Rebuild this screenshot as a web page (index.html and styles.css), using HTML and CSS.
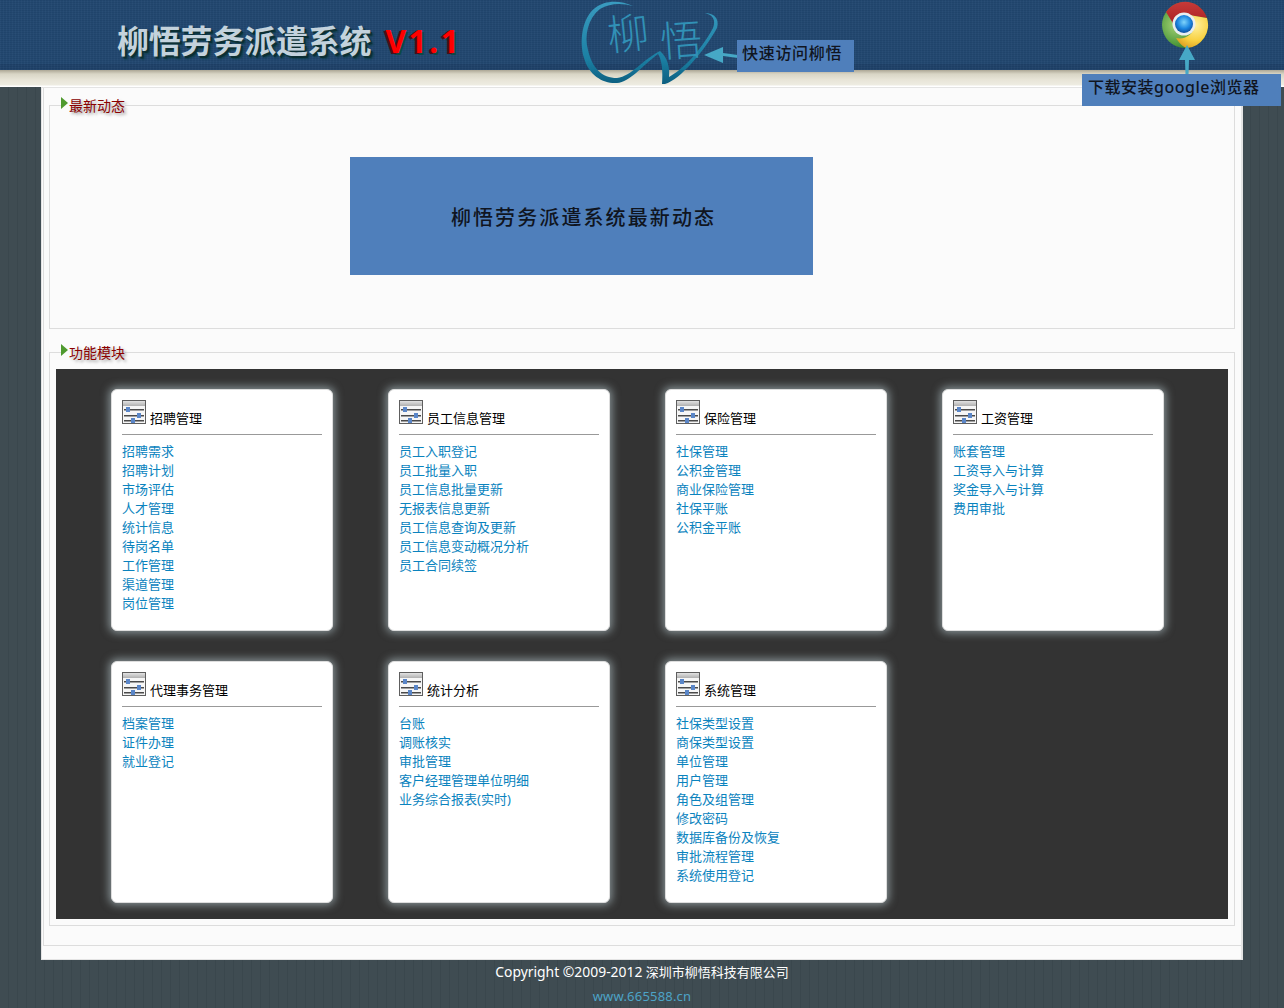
FILE: index.html
```html
<!DOCTYPE html>
<html lang="zh">
<head>
<meta charset="utf-8">
<title>柳悟劳务派遣系统</title>
<link rel="stylesheet" href="styles.css">
</head>
<body>
<header class="header">
  <div class="band"><h1 class="title">柳悟劳务派遣系统<span class="version">V1.1</span></h1></div>
  <a class="logo">
    <svg width="160" height="90" viewBox="0 0 160 90">
      <defs>
        <linearGradient id="swoosh" x1="0" y1="0" x2="0" y2="1"><stop offset="0" stop-color="#3a9cc0"/><stop offset=".7" stop-color="#1b7fa3"/><stop offset="1" stop-color="#0c5f80"/></linearGradient>
      </defs>
      <path d="M63 6C50 0 35 0 25 8 12 18 9 42 14 58c5 18 20 26 33 25 13-1 25-17 41-29 4 6 5 18 4 30h3c15-4 40-34 52-56 3-10-4-15-12-15 8 2 11 7 8 15-13 24-31 42-44 49 1-9-1-19-9-26-18 9-28 25-43 27-15 0-25-10-29-28-4-14 0-32 12-41 10-6 22-6 33-3z" fill="url(#swoosh)"/>
      <text x="37" y="49" class="logo-char" transform="rotate(-6 58 33)">柳</text>
      <text x="90" y="56" class="logo-char" transform="rotate(-4 110 40)">悟</text>
    </svg>
  </a>
  <svg class="arrow-left" width="36" height="20" viewBox="0 0 36 20"><path d="M0 10 19 2v6l15 2v3l-15-2v7z" fill="#46a8c6"/></svg>
  <div class="note note-visit">快速访问柳悟</div>
  <svg class="chrome" width="48" height="48" viewBox="0 0 48 48">
    <defs>
      <radialGradient id="cGreen" cx=".3" cy=".5" r=".7"><stop offset="0" stop-color="#a6d276"/><stop offset=".6" stop-color="#4f9a3c"/><stop offset="1" stop-color="#1d5a26"/></radialGradient>
      <linearGradient id="cRed" x1="0" y1="0" x2="0" y2="1"><stop offset="0" stop-color="#c73a38"/><stop offset="1" stop-color="#a81f24"/></linearGradient>
      <radialGradient id="cYellow" cx=".6" cy=".3" r=".8"><stop offset="0" stop-color="#fff2a0"/><stop offset=".6" stop-color="#f8d040"/><stop offset="1" stop-color="#d9981e"/></radialGradient>
      <radialGradient id="cBlue" cx=".5" cy=".4" r=".6"><stop offset="0" stop-color="#7fd4fb"/><stop offset=".6" stop-color="#1c86e0"/><stop offset="1" stop-color="#0f4f9e"/></radialGradient>
    </defs>
    <circle cx="24" cy="24" r="23" fill="url(#cGreen)"/>
    <path d="M5 11A23 23 0 0 1 46 17L27 14C19 13 14 17 13 24z" fill="url(#cRed)"/>
    <path d="M46 17A23 23 0 0 1 26 47C22 46 18 42 15 37 24 39 33 33 33 25c0-4-2-8-5-11z" fill="url(#cYellow)"/>
    <circle cx="23" cy="23" r="11.500" fill="#e9eef0"/>
    <circle cx="23" cy="23" r="9" fill="url(#cBlue)"/>
  </svg>
  <svg class="arrow-up" width="18" height="30" viewBox="0 0 18 30"><path d="M9 0l8 15h-6l-.5 15h-3L7 15H1z" fill="#46a8c6"/></svg>
  <div class="note note-chrome">下载安装google浏览器</div>
</header>

<main class="main">
  <div class="inner">
    <fieldset class="group group-news">
      <legend class="legend">最新动态</legend>
      <div class="news-banner">柳悟劳务派遣系统最新动态</div>
    </fieldset>
    <fieldset class="group group-modules">
      <legend class="legend">功能模块</legend>
      <div class="panel">
        <section class="card">
          <div class="card-head"><svg class="card-icon" viewBox="0 0 24 24"><use href="#sliders"/></svg><span>招聘管理</span></div>
          <ul class="links"><li>招聘需求</li><li>招聘计划</li><li>市场评估</li><li>人才管理</li><li>统计信息</li><li>待岗名单</li><li>工作管理</li><li>渠道管理</li><li>岗位管理</li></ul>
        </section>
        <section class="card">
          <div class="card-head"><svg class="card-icon" viewBox="0 0 24 24"><use href="#sliders"/></svg><span>员工信息管理</span></div>
          <ul class="links"><li>员工入职登记</li><li>员工批量入职</li><li>员工信息批量更新</li><li>无报表信息更新</li><li>员工信息查询及更新</li><li>员工信息变动概况分析</li><li>员工合同续签</li></ul>
        </section>
        <section class="card">
          <div class="card-head"><svg class="card-icon" viewBox="0 0 24 24"><use href="#sliders"/></svg><span>保险管理</span></div>
          <ul class="links"><li>社保管理</li><li>公积金管理</li><li>商业保险管理</li><li>社保平账</li><li>公积金平账</li></ul>
        </section>
        <section class="card">
          <div class="card-head"><svg class="card-icon" viewBox="0 0 24 24"><use href="#sliders"/></svg><span>工资管理</span></div>
          <ul class="links"><li>账套管理</li><li>工资导入与计算</li><li>奖金导入与计算</li><li>费用审批</li></ul>
        </section>
        <section class="card">
          <div class="card-head"><svg class="card-icon" viewBox="0 0 24 24"><use href="#sliders"/></svg><span>代理事务管理</span></div>
          <ul class="links"><li>档案管理</li><li>证件办理</li><li>就业登记</li></ul>
        </section>
        <section class="card">
          <div class="card-head"><svg class="card-icon" viewBox="0 0 24 24"><use href="#sliders"/></svg><span>统计分析</span></div>
          <ul class="links"><li>台账</li><li>调账核实</li><li>审批管理</li><li>客户经理管理单位明细</li><li>业务综合报表(实时)</li></ul>
        </section>
        <section class="card">
          <div class="card-head"><svg class="card-icon" viewBox="0 0 24 24"><use href="#sliders"/></svg><span>系统管理</span></div>
          <ul class="links"><li>社保类型设置</li><li>商保类型设置</li><li>单位管理</li><li>用户管理</li><li>角色及组管理</li><li>修改密码</li><li>数据库备份及恢复</li><li>审批流程管理</li><li>系统使用登记</li></ul>
        </section>
      </div>
    </fieldset>
  </div>
</main>

<footer class="footer">
  <div class="copyright"><span class="copyright-latin">Copyright ©2009-2012</span> 深圳市柳悟科技有限公司</div>
  <div class="site">www.665588.cn</div>
</footer>

<svg class="defs" width="0" height="0">
  <defs>
    <linearGradient id="iconTop" x1="0" y1="0" x2="0" y2="1"><stop offset="0" stop-color="#e2e2e2"/><stop offset="1" stop-color="#b0b0b0"/></linearGradient>
    <g id="sliders">
      <rect x=".5" y=".5" width="23" height="23" fill="#f6f6f6" stroke="#5e5e5e"/>
      <rect x="1" y="1" width="22" height="5" fill="url(#iconTop)"/>
      <rect x="2" y="9" width="20" height="1.500" fill="#4a4a4a"/>
      <rect x="2" y="15" width="20" height="1.500" fill="#4a4a4a"/>
      <rect x="2" y="20" width="20" height="1.500" fill="#4a4a4a"/>
      <rect x="4" y="7" width="4" height="5" fill="#5a86c8"/>
      <rect x="15" y="13" width="4" height="5" fill="#5a86c8"/>
      <rect x="9" y="18" width="4" height="5" fill="#5a86c8"/>
    </g>
  </defs>
</svg>
</body>
</html>
```
FILE: styles.css
```css
* { box-sizing: border-box; }
html, body { margin: 0; padding: 0; }
body {
  height: 1008px;
  overflow: hidden;
  font-family: "Noto Sans", "Noto Sans CJK SC", sans-serif;
  font-size: 13px;
  background: repeating-linear-gradient(90deg, #3f4c52 0 8px, #3a474d 8px 9px);
}
.header {
  position: relative;
  height: 87px;
  background: linear-gradient(180deg, #aca795 0, #d8d5c5 4px, #e8e5d8 10px, #eeece2 15px, #fff 16px) 0 70px / 100% 17px no-repeat;
}
.band {
  height: 70px;
  padding: 22px 0 0 117px;
  background:
    repeating-linear-gradient(90deg, rgba(255,255,255,.018) 0 1px, rgba(0,0,0,.018) 1px 3px),
    repeating-linear-gradient(0deg, rgba(255,255,255,.018) 0 1px, rgba(0,0,0,.018) 1px 2px),
    linear-gradient(180deg, #21466f 0, #21466f 64px, #1e4068 64px);
}
.title {
  margin: 0;
  font-size: 32px;
  line-height: 38px;
  font-weight: 700;
  letter-spacing: -.2px;
  color: #c3d2dc;
  text-shadow: 2px 2px 0 #0c2f33, 3px 3px 2px rgba(6, 60, 60, .7);
  white-space: nowrap;
}
.version { margin-left: 14px; color: #f00; text-shadow: -2px 1px 0 #4b0d1c, 2px 2px 0 #0c4a45; letter-spacing: 2.400px; }
.logo { position: absolute; left: 570px; top: 0; }
.logo-char { font-size: 42px; font-weight: 300; fill: #3191b6; }
.arrow-left { position: absolute; left: 704px; top: 45px; }
.note {
  position: absolute;
  background: #4f7fbb;
  color: #10151f;
  white-space: nowrap;
}
.note-visit {
  left: 737px; top: 40px; width: 117px; height: 32px;
  padding-left: 5px;
  font-size: 16px; line-height: 26px; letter-spacing: .7px;
  font-weight: 500;
}
.note-chrome {
  left: 1082px; top: 74px; width: 199px; height: 32px;
  padding-left: 6px;
  font-size: 16px; line-height: 26px; letter-spacing: .5px;
  font-weight: 500;
  z-index: 2;
}
.chrome { position: absolute; left: 1161px; top: 1px; }
.arrow-up { position: absolute; left: 1178px; top: 45px; }

.main {
  width: 1202px;
  height: 873px;
  margin-left: 41px;
  background: #fbfbfb;
  border: 1px solid #e4e4e4;
  border-right-width: 2px;
  padding-left: 1px;
}
.inner {
  height: 858px;
  border-left: 1px solid #ddd;
  border-bottom: 1px solid #ddd;
  padding: 9px 6px 0 5px;
}
.group {
  margin: 0;
  min-width: 0;
  border: 1px solid #ddd;
  padding: 0;
}
.group-news { height: 232px; }
.group-modules { margin-top: 15px; height: 582px; }
.legend {
  margin-left: 11px;
  padding: 2px 0 0 8px;
  font-size: 14px;
  line-height: 14px;
  color: #8b0000;
  text-shadow: 2px 2px 3px #999;
  position: relative;
}
.legend::before {
  content: "";
  position: absolute;
  left: 0; top: 0;
  border-left: 7px solid #4f9a2f;
  border-top: 6px solid transparent;
  border-bottom: 6px solid transparent;
}
.news-banner {
  width: 463px;
  height: 118px;
  margin: 44px 0 0 300px;
  padding-left: 4px;
  background: #4f7fbb;
  color: #10151f;
  font-size: 20px;
  letter-spacing: 2.100px;
  font-weight: 500;
  display: flex;
  align-items: center;
  justify-content: center;
}
.panel {
  height: 550px;
  margin: 9px 6px 0;
  background: #333;
  padding: 20px 55px 16px;
  display: grid;
  grid-template-columns: repeat(4, 222px);
  grid-template-rows: repeat(2, 242px);
  gap: 30px 55px;
}
.card {
  background: #fff;
  border: 1px solid #ddd;
  border-radius: 6px;
  padding: 10px;
  box-shadow: 0 0 9px 2px rgba(205, 225, 232, .55);
}
.card-head {
  display: flex;
  align-items: flex-end;
  gap: 4px;
  height: 35px;
  padding-bottom: 6px;
  border-bottom: 1px solid #999;
  color: #000;
  line-height: 19px;
}
.card-icon { width: 24px; height: 24px; flex: none; align-self: flex-start; }
.links {
  list-style: none;
  margin: 7px 0 0;
  padding: 0;
  line-height: 19px;
  color: #0a83be;
}
.footer { text-align: center; }
.copyright { color: #fff; line-height: 24px; }
.copyright-latin { font-size: 13.900px; }
.site { color: #4da3c7; line-height: 24px; letter-spacing: .2px; }
.defs { position: absolute; }
```
